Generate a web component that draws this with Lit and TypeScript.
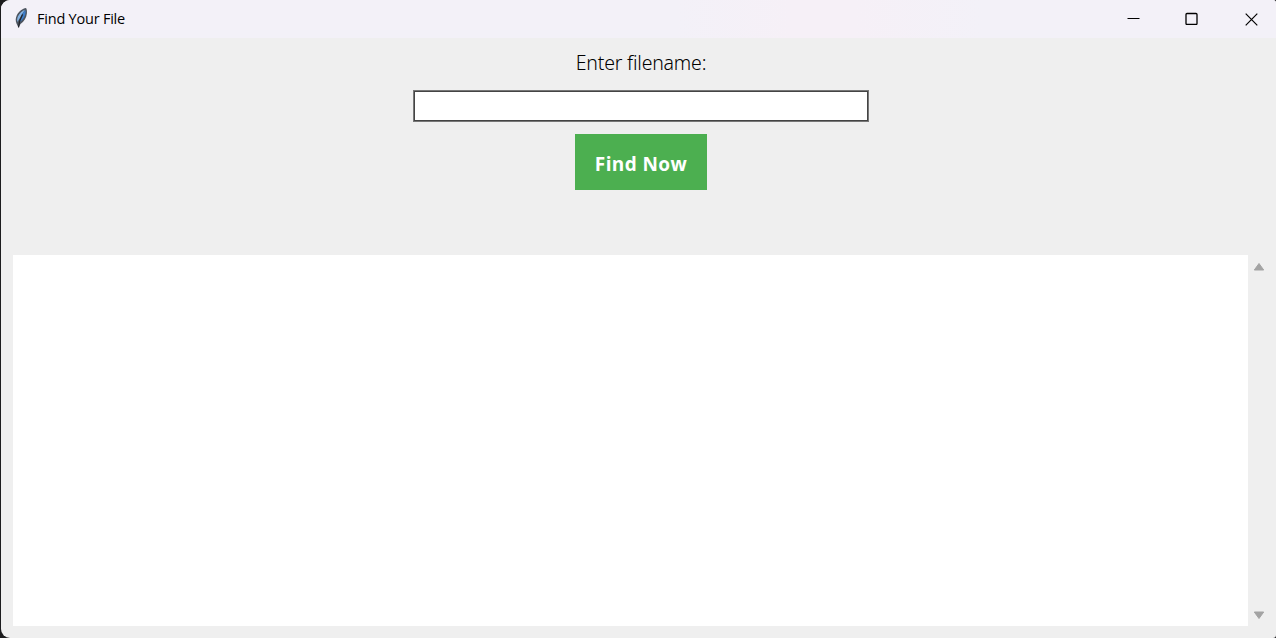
import { LitElement, html, css } from 'lit';
import { customElement, state } from 'lit/decorators.js';

/**
 * Title bar with the feather icon and the window controls
 */
@customElement('title-bar')
export class TitleBar extends LitElement {

    static styles = css`
        :host {
            display: flex;
            align-items: center;
            height: 38px;
            box-sizing: border-box;
            padding-left: 13px;
            background: linear-gradient(90deg, #f3f1f8 0%, #f3f1f8 53%, #f6f0f7 62%, #f6f0f7 67%, #f3f1f8 77%, #f3f1f8 100%);
            color: #000;
        }
        svg {
            display: block;
        }
        .feather {
            margin-bottom: 2px;
        }
        .title {
            flex: 1;
            margin-left: 8px;
            font-size: 14.5px;
            line-height: 20px;
            letter-spacing: -0.22px;
            white-space: nowrap;
        }
        .controls {
            display: flex;
            height: 100%;
        }
        .control {
            display: flex;
            align-items: center;
            justify-content: center;
            width: 58px;
            padding: 0 1px 1px 0;
            border: 0;
            background: none;
        }
        .control:last-child {
            width: 51px;
            margin-left: 4px;
            padding: 0 0 0 1px;
        }
    `;

    render() {
        return html`
            <svg class="feather" width="15" height="22" viewBox="0 0 15 22">
                <path d="M12 1 C8.6 1.4 5 4.2 2.8 8.2 C1.4 11 1.4 14 2.5 16.4 L4.5 20.8 L6.5 17 C10 14.8 12.4 10.8 12.9 6.5 C13.1 4.5 13 2.2 12 1Z" fill="#4d5560"/>
                <path d="M11 2.8 C8.2 3.8 5.5 6.4 3.9 9.4 C3 11.5 2.9 13.2 3.5 15 L8.6 6.2Z" fill="#84b2e2"/>
                <path d="M11.4 3 L8.4 6.4 L5.5 15.2 C9.1 13 11.4 9.2 11.7 4.8Z" fill="#3c7cc8"/>
                <path d="M8.6 7.4 C6.8 10.4 5.1 14 4.5 20.4" fill="none" stroke="#202329" stroke-width="1.2"/>
            </svg>
            <span class="title"><slot></slot></span>
            <div class="controls">
                <button class="control" aria-label="Minimize">
                    <svg width="13" height="13" viewBox="0 0 13 13">
                        <path d="M0.5 6.5 H12.5" stroke="#000" stroke-width="1"/>
                    </svg>
                </button>
                <button class="control" aria-label="Maximize">
                    <svg width="13" height="13" viewBox="0 0 13 13">
                        <rect x="1" y="1.5" width="11" height="11" rx="1" fill="none" stroke="#000" stroke-width="1.3"/>
                    </svg>
                </button>
                <button class="control" aria-label="Close">
                    <svg width="13" height="13" viewBox="0 0 13 13">
                        <path d="M0.7 0.7 L12.3 12.3 M12.3 0.7 L0.7 12.3" stroke="#000" stroke-width="1.2"/>
                    </svg>
                </button>
            </div>
        `;
    }
}

/**
 * The search form and the list of results
 */
@customElement('app-root')
export class AppRoot extends LitElement {

    static styles = css`
        :host {
            display: block;
            height: 100vh;
            box-sizing: border-box;
            padding-left: 1px;
            background: #1c1c1e;
            font-family: "Open Sans", "Noto Sans", sans-serif;
            overflow: hidden;
        }
        .window {
            display: flex;
            flex-direction: column;
            height: 100%;
            border-radius: 9px 3px 3px 9px;
            background: #efefef;
            overflow: hidden;
        }
        .form {
            display: flex;
            flex-direction: column;
            align-items: center;
            height: 217px;
            padding-left: 5px;
        }
        .label {
            margin-top: 11px;
            font-family: "Noto Sans", sans-serif;
            font-weight: 300;
            font-size: 19.5px;
            line-height: 28px;
            letter-spacing: -0.2px;
            color: #000;
        }
        .entry {
            box-sizing: border-box;
            width: 456px;
            height: 32px;
            margin-top: 13px;
            padding: 2px 4px;
            border: 1px solid #777;
            border-radius: 0;
            outline: none;
            box-shadow: inset 0 0 0 1px #444;
            background: #fff;
            font: inherit;
        }
        .find {
            width: 132px;
            height: 56px;
            margin-top: 12px;
            padding: 3px 0 0;
            border: 0;
            background: #4caf50;
            color: #fff;
            font-family: "Open Sans", sans-serif;
            font-weight: 700;
            font-size: 19px;
            letter-spacing: 0.4px;
        }
        .results {
            display: flex;
            flex: 1;
            padding: 0 7px 12px 12px;
        }
        .list {
            flex: 1;
            background: #fff;
        }
        .scrollbar {
            display: flex;
            flex-direction: column;
            justify-content: space-between;
            align-items: center;
            width: 21px;
            padding: 7px 0 6px;
            box-sizing: border-box;
        }
        .scrollbar svg {
            display: block;
        }
    `;

    @state()
    private _files: string[] = [];

    render() {
        return html`
            <div class="window">
                <title-bar>Find Your File</title-bar>
                <div class="form">
                    <label class="label" for="filename">Enter filename:</label>
                    <input class="entry" id="filename" type="text">
                    <button class="find">Find Now</button>
                </div>
                <div class="results">
                    <div class="list">${this._files.map(file => html`<div>${file}</div>`)}</div>
                    <div class="scrollbar">
                        <svg width="12" height="9" viewBox="0 0 12 9">
                            <path d="M6 1.5 L10.7 8 H1.3Z" fill="#a3a3a3" stroke="#a3a3a3" stroke-linejoin="round"/>
                        </svg>
                        <svg width="12" height="9" viewBox="0 0 12 9">
                            <path d="M6 7.5 L10.7 1 H1.3Z" fill="#a3a3a3" stroke="#a3a3a3" stroke-linejoin="round"/>
                        </svg>
                    </div>
                </div>
            </div>
        `;
    }
}
